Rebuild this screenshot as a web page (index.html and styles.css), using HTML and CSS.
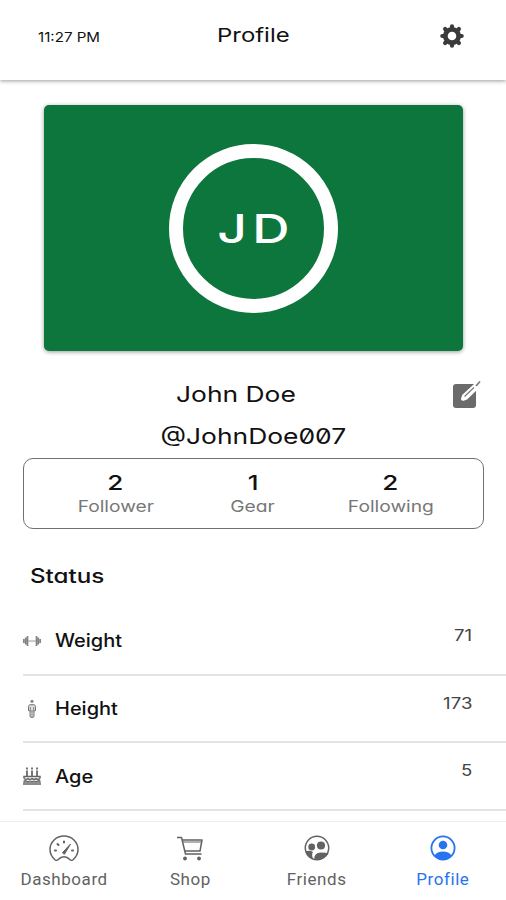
FILE: index.html
```html
<!DOCTYPE html>
<html lang="en">
<head>
<meta charset="utf-8">
<title>Profile</title>
<link rel="stylesheet" href="styles.css">
</head>
<body>
<div class="app">
  <header class="header">
    <span class="wide time">11:27 PM</span>
    <h1 class="wide title">Profile</h1>
    <svg class="gear" viewBox="0 0 24 24"><g fill="none" stroke="#3b3b3b"><circle cx="12" cy="12" r="6.7" stroke-width="4.8"/><path stroke-width="4.2" stroke-linecap="round" d="M12 2.3v2M12 19.7v2M2.3 12h2M19.7 12h2M5.1 5.1l1.4 1.4M17.5 17.5l1.4 1.4M5.1 18.9l1.4-1.4M17.5 6.5l1.4-1.4"/></g></svg>
  </header>
  <main class="content">
    <section class="cover"><div class="avatar"><span class="wide initials">JD</span></div></section>
    <section class="identity">
      <div class="wide name">John Doe</div>
      <svg class="edit" viewBox="0 0 30 30"><rect x="1" y="4" width="23" height="24" rx="3" fill="#6b6b6b"/><path d="M24 5 12 16l-1 2.8 3-.9L25 7" fill="none" stroke="#fff" stroke-width="4" stroke-linejoin="round"/><path d="M22 7.500 12.500 16.500" fill="none" stroke="#777" stroke-width="1.1"/><path d="M24 6 28 1.500" fill="none" stroke="#777" stroke-width="1.6"/></svg>
      <div class="wide handle">@JohnDoe007</div>
    </section>
    <section class="stats">
      <div class="stat"><b class="wide count">2</b><span class="wide label">Follower</span></div>
      <div class="stat"><b class="wide count">1</b><span class="wide label">Gear</span></div>
      <div class="stat"><b class="wide count">2</b><span class="wide label">Following</span></div>
    </section>
    <h2 class="wide status">Status</h2>
    <ul class="list">
      <li class="row">
        <svg class="row-icon" viewBox="0 0 18 18"><path d="M.8 7v4M2.700 5.500v7M4.500 4v10M13.500 4v10M15.300 5.500v7M17.200 7v4" fill="none" stroke="#858585" stroke-width="1.7"/><path d="M5 9h8" stroke="#999"/></svg>
        <span class="wide row-label">Weight</span><span class="wide value">71</span>
      </li>
      <li class="row">
        <svg class="row-icon" viewBox="0 0 18 18"><circle cx="9" cy="1.300" r="1.600" fill="#888"/><path d="M7 4.700h4q1.500.3 1.500 2v4H11V16q-.3 1.500-1.200 1.500H8.200Q7.200 17.500 7 16v-5.300H5.500v-4q0-1.700 1.500-2z" fill="#ddd" stroke="#777"/><path d="M9 11v6M7.300 7v4h3.400V7" fill="none" stroke="#888"/></svg>
        <span class="wide row-label">Height</span><span class="wide value">173</span>
      </li>
      <li class="row">
        <svg class="row-icon" viewBox="0 0 18 18"><path d="M4 3.500v5.500M9 3.500v5.500M14 3.500v5.500M4 .5v2M9 .5v2M14 .5v2" stroke="#777" stroke-width="2"/><path d="M1 11.500V9.500h16v2M0 17h18" fill="none" stroke="#666" stroke-width="1.500"/><path d="M1 11.500q2 2 4 0 2 2 4 0 2 2 4 0 2 2 4 0M1 16v-2q2-1 4 1 2-2 4 0 2-2 4 0 2-2 4-1v2" fill="#999" stroke="#666" stroke-width="1.100"/></svg>
        <span class="wide row-label">Age</span><span class="wide value">5</span>
      </li>
    </ul>
  </main>
  <nav class="tabs">
    <a class="tab">
      <svg class="tab-icon dash" viewBox="0 0 30 26"><path d="M6.200 25Q1 20.500 1 14.500a14 13.400 0 0 1 28 0q0 6-5.200 10.500-1.500 1-3-.5-2.500-2.800-5.800-2.800t-5.800 2.800q-1.500 1.500-3 .5z"/><path d="m13.600 17.500 8-8.500-6 10z" fill="currentColor" stroke-width="1"/><path stroke-width="2" d="M6 15.500h1M23 15.500h1M15 6.500v1M8.500 9l1 1"/></svg>
      <span class="tab-label">Dashboard</span></a>
    <a class="tab">
      <svg class="tab-icon" viewBox="0 0 26 26"><path d="M0 2.500h4.500l4 16.500H24M5.500 5H25l-2 11H8"/><path d="M6 7h18" stroke-width="1"/><circle cx="8" cy="23.500" r="1.900" fill="currentColor" stroke="none"/><circle cx="22" cy="23.500" r="1.900" fill="currentColor" stroke="none"/></svg>
      <span class="tab-label">Shop</span></a>
    <a class="tab">
      <svg class="tab-icon" viewBox="0 0 26 26"><circle cx="13" cy="13" r="11.700"/><g fill="currentColor" stroke="none"><circle cx="7.700" cy="12" r="3.400"/><circle cx="17" cy="10.500" r="4.100"/><path d="M1.500 16.500q4-1.500 7.500.5-2 3 .5 7.700-6-1.700-8-8.200zM10.500 25q-1-7.500 6.500-7.500 5 0 7.500 1Q20 26 10.500 25z"/></g></svg>
      <span class="tab-label">Friends</span></a>
    <a class="tab active">
      <svg class="tab-icon" viewBox="0 0 26 26"><circle cx="13" cy="13" r="11.600" stroke-width="1.800"/><circle cx="13" cy="10" r="4.300" fill="currentColor" stroke="none"/><path d="M4.500 20.500Q7 16.500 13 16.500t8.500 4q-3.500 4.500-8.500 4.500t-8.500-4.500z" fill="currentColor" stroke="none"/></svg>
      <span class="tab-label">Profile</span></a>
  </nav>
</div>
</body>
</html>
```
FILE: styles.css
```css
* { box-sizing: border-box; }
body { margin: 0; background: #fff; color: #111; font-family: Inter, sans-serif; font-feature-settings: "zero", "cv11"; }
h1, h2, ul { margin: 0; padding: 0; }
.app { display: flex; flex-direction: column; height: 900px; overflow: hidden; }
/* Extended letterforms: every text run is stretched horizontally. */
.wide { display: inline-block; white-space: nowrap; transform: scaleX(1.2); transform-origin: center; }

.header { flex: none; height: 80px; display: grid; grid-template-columns: 1fr 80px 1fr; align-items: center; padding: 0 42px 8px 38px; box-shadow: 0 1px 4px rgba(0,0,0,.4); }
.header .time { font-size: 13.5px; justify-self: start; transform: scaleX(1.12); transform-origin: left; padding-top: 2px; }
.header .title { font-size: 19px; font-weight: 400; justify-self: center; line-height: 24px; transform: translateX(2.5px) scaleX(1.26); }
.gear { width: 24px; height: 24px; justify-self: end; }

.content { flex: 1; min-height: 0; overflow: hidden; padding-top: 25px; }
.cover { width: 419px; height: 246px; margin-left: 44px; border-radius: 5px; background: #0d763d; box-shadow: 0 1px 4px rgba(0,0,0,.4); display: flex; align-items: center; justify-content: center; }
.avatar { width: 169px; height: 169px; border: 14px solid #fff; border-radius: 50%; display: flex; align-items: center; justify-content: center; padding-top: 2px; }
.initials { color: #fff; font-size: 40px; line-height: 48px; font-weight: 500; letter-spacing: 4px; margin-right: -4px; transform: scaleX(1.29); }

.identity { display: grid; grid-template-columns: 23px 1fr 23px; padding-top: 22px; }
.name, .handle { grid-column: 2; grid-row: 1; justify-self: center; font-size: 22px; line-height: 42px; }
.name { margin-right: 34px; }
.handle { grid-row: 2; }
.edit { grid-column: 2; grid-row: 1; justify-self: end; width: 30px; height: 30px; margin: 7px 1px 0 0; }

.stats { height: 71px; margin: 1px 22px 0 23px; border: 1px solid #707070; border-radius: 10px; display: grid; grid-template-columns: 183px 92px 183px; padding-top: 12px; }
.stat { display: flex; flex-direction: column; align-items: center; }
.count { font-size: 20px; line-height: 25px; font-weight: 500; transform: scaleX(1.3); }
.label { font-size: 16px; line-height: 20px; color: #777; }

.status { font-size: 19.5px; line-height: 24px; font-weight: 500; margin: 35px 0 0 30px; transform: scaleX(1.24); transform-origin: left; }
.list { list-style: none; margin-left: 23px; padding-top: 20px; }
.row { display: flex; align-items: center; height: 67.7px; border-bottom: 2px solid #e4e4e4; padding-right: 34px; }
.row-icon { width: 18px; height: 18px; margin-right: 14px; overflow: visible; }
.row-label { font-size: 18px; font-weight: 500; transform: scaleX(1.11); transform-origin: left; }
.value { margin: 0 0 11px auto; font-size: 15.5px; color: #444; transform-origin: right; }

.tabs { flex: none; height: 79px; border-top: 1px solid #eee; background: #fff; display: grid; grid-template-columns: repeat(4, 1fr); padding-left: 1px; }
.tab { display: flex; flex-direction: column; align-items: center; padding-top: 13px; color: #626262; }
.tab-icon { width: 26px; height: 26px; fill: none; stroke: currentColor; stroke-width: 1.5; stroke-linecap: round; stroke-linejoin: round; }
.dash { width: 30px; }
.tab-label { margin-top: 8px; font: 17px/20px Roboto, sans-serif; letter-spacing: .55px; }
.active { color: #2873f0; }
```
